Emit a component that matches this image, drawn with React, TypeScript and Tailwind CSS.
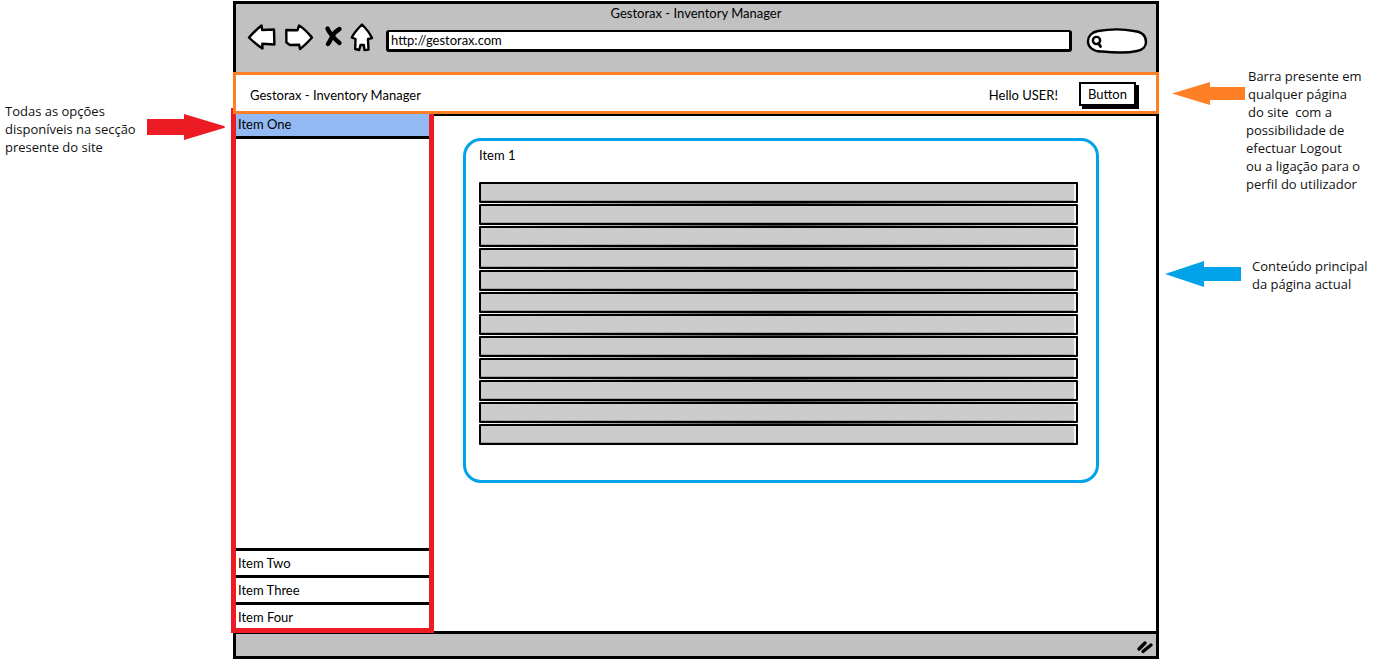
import React from "react";

const rows = Array.from({ length: 12 }, (_, i) => i);

function Note({ lines, className = "" }: { lines: string[]; className?: string }) {
  return (
    <p className={`font-['Open_Sans',sans-serif] text-[13px] leading-[18px] whitespace-pre text-[#111] ${className}`}>
      {lines.map((line) => (
        <span key={line} className="block">
          {line}
        </span>
      ))}
    </p>
  );
}

function ToolButton({ label, children }: { label: string; children: React.ReactNode }) {
  return (
    <button type="button" aria-label={label} className="shrink-0">
      {children}
    </button>
  );
}

const stroke = {
  fill: "#fff",
  stroke: "#000",
  strokeWidth: 2.4,
  strokeLinejoin: "round" as const,
  strokeLinecap: "round" as const,
};

function BrowserHeader() {
  return (
    <header className="h-[68px] bg-[#c1c1c1]">
      <h1 className="text-center text-[13px] leading-[18px]">Gestorax - Inventory Manager</h1>
      <div className="flex h-[30px] items-center pr-2 pl-[11px]">
        <ToolButton label="Back">
          <svg width="30" height="28" viewBox="0 0 30 28">
            <path {...stroke} d="M2 14.5 C6 10 10 6 14.5 2.5 L15.2 7 L27 6.5 L27.4 21.5 L15.3 20.8 L15.5 25.5 C10 22 6 18.5 2 14.5 Z" />
          </svg>
        </ToolButton>
        <ToolButton label="Forward">
          <svg className="ml-[7px]" width="30" height="28" viewBox="0 0 30 28">
            <path {...stroke} d="M2.3 7 L13.5 7.2 L15 2.5 C20 5 24 10 28 14.5 C24 19 20 23 16 26 L15.2 21.8 L6 22 L2.4 19.5 Z" />
          </svg>
        </ToolButton>
        <ToolButton label="Stop">
          <svg className="ml-[10px]" width="20" height="24" viewBox="0 0 20 24">
            <path
              d="M3.5 3.5 C4 5 6 8 8 10.5 C10 13 13 16 15.5 18 M15.5 4 C12 6 10 8 8.5 11 C7 14 5.5 17 4 19"
              fill="none"
              stroke="#000"
              strokeWidth="4.4"
              strokeLinecap="round"
            />
          </svg>
        </ToolButton>
        <ToolButton label="Home">
          <svg className="ml-[6px]" width="24" height="30" viewBox="0 0 24 30">
            <path
              {...stroke}
              d="M12 2.5 C8 6.5 4 10.5 1.8 15.5 L5.5 17 L5.2 27 L9.2 28 L10.5 23 L13.8 23 L14.5 28 L18.5 27.6 L18 17 L22 16 C19.5 10.5 16 6.5 12 2.5 Z"
            />
          </svg>
        </ToolButton>
        <input
          type="text"
          aria-label="Address"
          defaultValue="http://gestorax.com"
          className="mt-[8px] ml-3 h-[22px] min-w-0 flex-1 rounded-[3px] border-[3px] border-t-2 border-black bg-white px-[2px] pb-px text-[13px] leading-4 outline-none"
        />
        <div className="relative mt-[8px] ml-[14px] h-[26px] w-[62px]">
          <svg className="absolute inset-0" width="62" height="26" viewBox="0 0 62 26">
            <path
              {...stroke}
              d="M2 13 C2 8 6 4 12 3 C24 1 38 1 48 3 C57 4 60 9 60 14 C60 18 57 22 51 23 C42 25 30 25 16 23.5 C7 24 2 19 2 13 Z"
            />
            <circle cx="10.5" cy="12.5" r="3.6" fill="none" stroke="#000" strokeWidth="2.4" />
            <path d="M12.5 15.5 L14.5 18.5" stroke="#000" strokeWidth="2.8" strokeLinecap="round" />
          </svg>
          <input
            type="search"
            aria-label="Search"
            className="relative h-full w-full bg-transparent pr-2 pl-5 text-[13px] outline-none"
          />
        </div>
      </div>
    </header>
  );
}

function SiteBar() {
  return (
    <div className="relative z-10 -mx-[3px] flex h-[42px] items-center border-[3px] border-[#ff7f27] bg-white pt-[2px] pr-5 pl-[14px]">
      <span className="flex-1 pt-1">Gestorax - Inventory Manager</span>
      <span className="mr-[21px] pt-1">Hello USER!</span>
      <button
        type="button"
        className="h-6 w-[57px] border-2 border-black bg-white leading-4 shadow-[3px_3px_0_#000]"
      >
        Button
      </button>
    </div>
  );
}

function Sidebar() {
  return (
    <nav className="relative -mt-2 -mb-[2px] -ml-[5px] flex w-[203px] shrink-0 flex-col border-x-[5px] border-b-[5px] border-[#ed1c24] bg-white pt-[6px] leading-[22px]">
      <a href="#one" className="border-b-[3px] border-black bg-[#93b9f2] pb-[2px] pl-[2px] leading-5">
        Item One
      </a>
      <div className="flex-1" />
      <a href="#two" className="border-t-[3px] border-black pt-px pl-[2px]">
        Item Two
      </a>
      <a href="#three" className="mt-px border-t-[3px] border-black pt-px pl-[2px]">
        Item Three
      </a>
      <a href="#four" className="mt-px border-t-[3px] border-black pt-px pl-[2px]">
        Item Four
      </a>
    </nav>
  );
}

function Content() {
  return (
    <main className="min-w-0 flex-1 pt-[22px] pr-[57px] pb-8 pl-[29px]">
      <section className="rounded-[18px] border-[3px] border-[#00a2e8] pt-[5px] pr-[18px] pb-[35px] pl-[13px]">
        <h2 className="leading-[18px]">Item 1</h2>
        <ul className="mt-[18px] flex flex-col gap-px bg-linear-to-r from-white via-[#444] to-white">
          {rows.map((row) => (
            <li
              key={row}
              className="h-[21px] rounded-[1px] border-2 border-black bg-[#cccccc] shadow-[inset_-2px_0_0_#f4f4f4,inset_0_-1px_0_#a3a3a3]"
            />
          ))}
        </ul>
      </section>
    </main>
  );
}

export default function App() {
  return (
    <div className="flex min-h-screen bg-white font-['Lato',sans-serif] text-[13px] text-black">
      <aside className="w-[233px] shrink-0 pt-[102px] pl-[5px]">
        <div className="flex items-start">
          <Note className="w-[142px]" lines={["Todas as opções", "disponíveis na secção", "presente do site"]} />
          <svg className="mt-3" width="79" height="26" viewBox="0 0 79 26" fill="#ed1c24">
            <path d="M0 5 H37 V0 L77 12 Q79 13 77 14 L37 26 V21 H0 Z" />
          </svg>
        </div>
      </aside>

      <div className="mt-px mb-px flex min-w-0 flex-1 flex-col border-[3px] border-black">
        <BrowserHeader />
        <SiteBar />
        <div className="flex flex-1 border-t-2 border-black">
          <Sidebar />
          <Content />
        </div>
        <footer className="flex h-[25px] items-center justify-end border-t-[3px] border-black bg-[#c1c1c1] pr-[2px]">
          <svg className="mt-1" width="18" height="16" viewBox="0 0 18 16">
            <path d="M3 10 L9 4 M7 12.5 L15 6" stroke="#000" strokeWidth="3.4" strokeLinecap="round" />
          </svg>
        </footer>
      </div>

      <aside className="flex w-[227px] shrink-0 flex-col gap-16 pt-[67px]">
        <div className="flex items-start pl-[13px]">
          <svg className="mt-[15px] shrink-0" width="73" height="23" viewBox="0 0 73 23" fill="#ff7f27">
            <path d="M0 11.5 L38 0 V5 H73 V18 H38 V23 Z" />
          </svg>
          <div>
            <Note className="pl-[3px]" lines={["Barra presente em", "qualquer página", "do site  com a"]} />
            <Note
              className="pl-px"
              lines={["possibilidade de", "efectuar Logout", "ou a ligação para o", "perfil do utilizador"]}
            />
          </div>
        </div>
        <div className="flex items-start pl-[6px]">
          <svg className="mt-1 shrink-0" width="76" height="26" viewBox="0 0 76 26" fill="#00a2e8">
            <path d="M0 13 L39 0 V6 H76 V20 H39 V26 Z" />
          </svg>
          <Note className="pl-[11px]" lines={["Conteúdo principal", "da página actual"]} />
        </div>
      </aside>
    </div>
  );
}
